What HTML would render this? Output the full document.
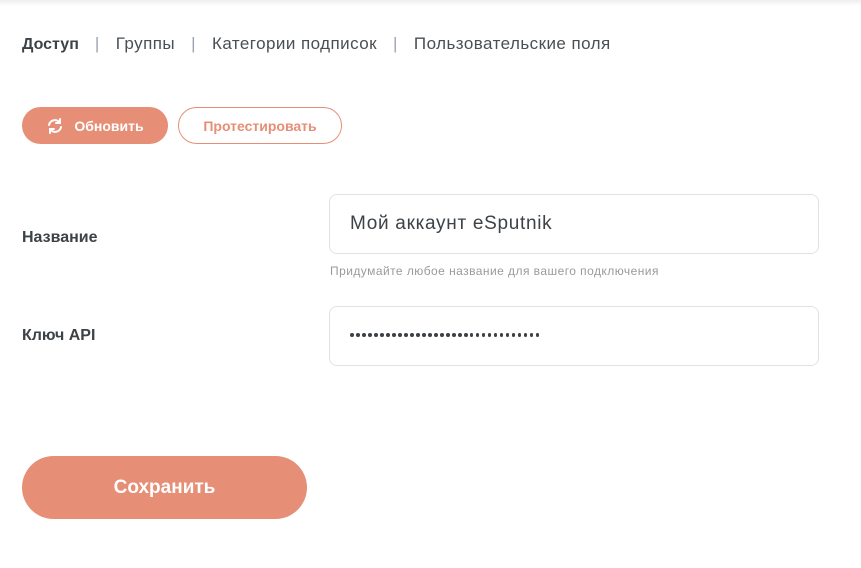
<!DOCTYPE html>
<html><head><meta charset="utf-8"><style>
*{margin:0;padding:0;box-sizing:border-box}
body{width:861px;height:568px;background:#fff;font-family:"Liberation Sans",sans-serif;position:relative;overflow:hidden;color:#3d4246}
.top{position:absolute;left:0;top:0;width:861px;height:6px;background:linear-gradient(#eeeeee,#fff)}
.tabs{position:absolute;left:22px;top:34px;font-size:17px;color:#4a4f54;white-space:nowrap;letter-spacing:0.45px}
.tabs b{color:#3d4246;letter-spacing:0;font-size:16px}
.tabs .s{color:#9aa3b5;margin:0 16px}
.btn{position:absolute;top:107px;height:37px;border-radius:19px;font-size:14px;font-weight:bold;display:flex;align-items:center;justify-content:center}
.b1{left:22px;width:146px;background:#e68f76;color:#fff}
.b2{left:178px;width:164px;border:1px solid #e68f76;color:#e68f76}
.lbl{position:absolute;left:22px;font-size:16px;font-weight:bold;color:#3d4246}
.inp{position:absolute;left:329px;width:490px;height:60px;border:1px solid #e2e2e2;border-radius:8px}
.hint{position:absolute;left:330px;top:264px;font-size:12px;color:#9a9a9a;letter-spacing:0.45px}
.dots{position:absolute;left:350px;top:333px;display:flex;gap:2.2px}
.dots i{width:3.8px;height:3.8px;border-radius:50%;background:#3d4246;display:block}
.save{position:absolute;left:22px;top:456px;width:285px;height:63px;border-radius:32px;background:#e68f76;color:#fff;font-size:19px;font-weight:bold;display:flex;align-items:center;justify-content:center}
</style></head><body>
<div class="top"></div>
<div class="tabs"><b>Доступ</b><span class="s">|</span>Группы<span class="s">|</span>Категории подписок<span class="s">|</span>Пользовательские поля</div>
<div class="btn b1"><svg width="18" height="16" viewBox="0 0 18 16" style="margin-right:10px" fill="none" stroke="#fff" stroke-width="2" stroke-linecap="round"><path d="M3 7a6 6 0 0 1 11-2"/><path d="M14 1v4h-4"/><path d="M15 9a6 6 0 0 1-11 2"/><path d="M4 15v-4h4"/></svg>Обновить</div>
<div class="btn b2">Протестировать</div>
<div class="lbl" style="top:229px">Название</div>
<div class="inp" style="top:194px"></div>
<div style="position:absolute;left:350px;top:213px;font-size:19px;color:#3d4246;letter-spacing:0.7px">Мой аккаунт eSputnik</div>
<div class="hint">Придумайте любое название для вашего подключения</div>
<div class="lbl" style="top:327px">Ключ API</div>
<div class="inp" style="top:306px"></div>
<div class="dots"><i></i><i></i><i></i><i></i><i></i><i></i><i></i><i></i><i></i><i></i><i></i><i></i><i></i><i></i><i></i><i></i><i></i><i></i><i></i><i></i><i></i><i></i><i></i><i></i><i></i><i></i><i></i><i></i><i></i><i></i><i></i><i></i></div>
<div class="save">Сохранить</div>
</body></html>
